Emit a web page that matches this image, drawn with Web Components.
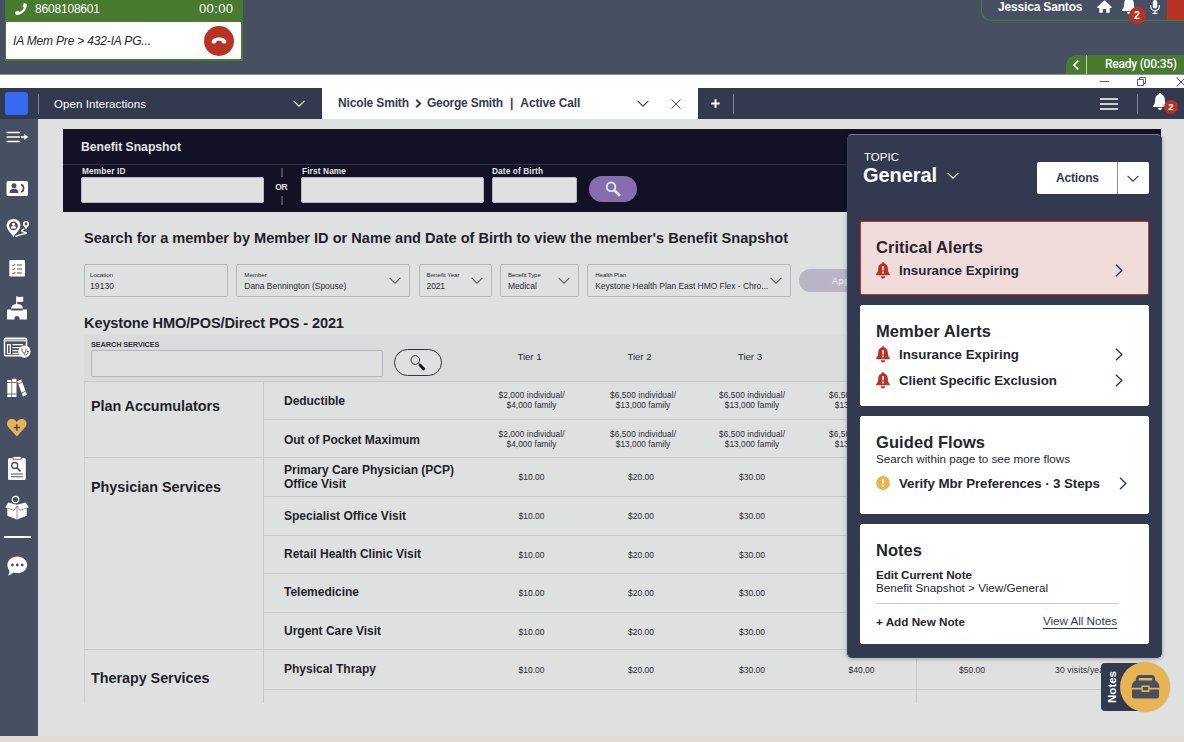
<!DOCTYPE html>
<html lang="en">
<head>
<meta charset="utf-8">
<title>Benefit Snapshot</title>
<style>
  body {
    margin: 0;
    width: 1184px;
    height: 742px;
    overflow: hidden;
    font-family: "Liberation Sans", Arial, sans-serif;
    color: #1f1f29;
    background: #e1dbd4;
  }
</style>
</head>
<body>
<agent-desktop></agent-desktop>

<script>
// icons, each drawn in a box of [width, height]
const icons = {
  phone: [12, 12, `<path fill="#fff" d="M9.4 .3l2.1 .5c.3 .1 .4 .3 .4 .6C11.600 7.400 7 11.900 1.200 11.900c-.3 0-.5-.1-.6-.4L.1 9.300c-.1-.3 .1-.5 .3-.6l2.500-1c.2-.1 .5 0 .6 .2l1 1.200C6.500 8.100 8 6.600 8.900 4.600L7.700 3.600c-.2-.2-.2-.4-.2-.6L8.700 .6c.1-.2 .4-.4 .7-.3z"/>`],
  hangup: [16, 8, `<path fill="#fff" d="M8 .6c3.500 0 7 1.300 7.200 3.900 .1 1.500-.4 2.200-1.400 2.100l-2.200-.4c-.7-.1-1-.6-1-1.200V4.200C9.200 3.600 6.800 3.600 5.400 4.200V5c0 .6-.3 1.100-1 1.200l-2.200 .4C1.200 6.700 .7 6 .8 4.500 1 1.900 4.500 .6 8 .6z"/>`],
  home: [15, 13, `<path fill="#fff" d="M7.500 .3L15 7.300l-.8 .7H12.700V12.800H9.200V9H5.800v3.800H2.300V8H.8L0 7.300z"/>`],
  bell: [14, 17, `<path fill="#fff" d="M7 0c.8 0 1.300 .5 1.300 1.200C10.700 1.900 11.700 3.900 11.800 6.400c.1 3.400 .6 5 2.100 6.400 .3 .7 0 1.200-.7 1.200H.8C.1 14-.2 13.500 .1 12.800c1.500-1.400 2-3 2.100-6.400 .1-2.500 1.100-4.500 3.500-5.200C5.700 .5 6.200 0 7 0zM4.900 14.800h4.200C9 16.200 8.200 17 7 17s-2-.8-2.100-2.200z"/>`],
  mic: [10, 14, `<rect x="2.800" y="0" width="4.400" height="8.500" rx="2.200" fill="#fff"/><path d="M.7 5v1.500a4.300 4.300 0 0 0 8.600 0V5M5 10.800V13M2.500 13.300h5" fill="none" stroke="#fff" stroke-width="1.200"/>`],
  down: [12, 7, `<path d="M.6 .8L6 6.200 11.400 .8" fill="none" stroke="currentColor" stroke-width="1.100"/>`],
  right: [8, 13, `<path d="M1 .8L6.800 6.500 1 12.200" fill="none" stroke="#2f3850" stroke-width="1.400"/>`],
  back: [6, 10, `<path d="M5.300 .7L1 5l4.300 4.300" fill="none" stroke="#fff" stroke-width="1.700"/>`],
  crumb: [7, 9, `<path d="M1.200 .8L5.200 4.500 1.200 8.200" fill="none" stroke="#333a4f" stroke-width="1.900"/>`],
  close: [10, 10, `<path d="M.6 .6l8.800 8.800M9.400 .6L.6 9.400" fill="none" stroke="#4c5366" stroke-width="1"/>`],
  plus: [9, 9, `<path d="M4.500 .3v8.400M.3 4.500h8.400" stroke="#fff" stroke-width="2"/>`],
  menu: [18, 12, `<path d="M0 1h18M0 6h18M0 11h18" stroke="#fff" stroke-width="1.600"/>`],
  minimize: [9, 9, `<path d="M0 4.500h9" stroke="#5a6172" stroke-width="1"/>`],
  restore: [9, 9, `<path d="M.5 2.500h6v6h-6zM2.500 2.500v-2h6v6h-2" fill="none" stroke="#5a6172" stroke-width="1"/>`],
  search: [16, 16, `<circle cx="6" cy="5.800" r="4.300" fill="none" stroke="#e3e3e6" stroke-width="1.900"/><path d="M9.300 9.200l5.600 5.600" stroke="#e3e3e6" stroke-width="2.800"/>`],
  lookup: [16, 16, `<circle cx="5.300" cy="5" r="4.300" fill="none" stroke="#333" stroke-width="1"/><path d="M8.500 8.400l1.700 1.700" stroke="#222" stroke-width="1.200"/><path d="M9.500 9.500l5 5.200" stroke="#11101f" stroke-width="2.800"/>`],
  alert: [14, 17, `<path fill="#b83225" d="M7 .3c.8 0 1.200 .5 1.300 1.200 2.400 .6 3.400 2.500 3.500 4.800 .1 3.200 .6 4.400 2 5.800 .3 .7 0 1.200-.7 1.200H.9c-.7 0-1-.5-.7-1.200 1.400-1.400 1.900-2.600 2-5.800 .1-2.300 1.100-4.200 3.500-4.800C5.800 .8 6.200 .3 7 .3zM4.900 14.300h4.200c-.1 1.400-.9 2.200-2.100 2.200s-2-.8-2.100-2.200z"/><path d="M6 4.300h2l-.4 4.200H6.400z" fill="#fff"/><circle cx="7" cy="10.500" r="1.050" fill="#fff"/>`],
  warn: [14, 14, `<circle cx="7" cy="7" r="6.900" fill="#e7b453"/><path d="M6 3h2l-.4 4.700H6.400z" fill="#fff"/><circle cx="7" cy="10" r="1.100" fill="#fff"/>`],
  toolbox: [29, 24, `<path d="M6.300 6.500V4c0-1.600 .9-2.500 2.400-2.500h11.600c1.500 0 2.400 .9 2.400 2.500v2.500" fill="none" stroke="#474f62" stroke-width="2.800"/><path d="M4.500 5.500h20c2.700 1.500 3.800 4 4 7.300H18.700v-2.300h-8.400v2.300H.5c.2-3.300 1.300-5.800 4-7.300z" fill="#474f62"/><path d="M1 14.500h9.500V17h8v-2.500H28V21c0 1.700-.8 2.500-2.300 2.500H3.300C1.800 23.500 1 22.700 1 21z" fill="#474f62"/><path d="M11.800 12h5.400v3.300h-5.400z" fill="#474f62"/>`],

  // side rail, all in the same 38x40 cell
  expand: [38, 36, `<path d="M6.500 13.500h13.500M6.500 18h13.500M6.500 22.500h13.500" stroke="#fff" stroke-width="1.600"/><path d="M21 18h4" stroke="#fff" stroke-width="1.600"/><path d="M24.300 15l4 3-4 3z" fill="#fff"/>`],
  contact: [38, 40, `<rect x="6.500" y="13" width="21.500" height="15" rx="1.500" fill="#fff"/><circle cx="14" cy="17.800" r="2.500" fill="#474f62"/><path d="M9.500 25c0-2.800 1.500-4.300 4.500-4.300s4.500 1.500 4.500 4.300z" fill="#474f62"/><path d="M21 16.600c3.400 .4 3.400 7 0 7.400" fill="none" stroke="#474f62" stroke-width="1.700"/>`],
  journey: [38, 40, `<path d="M13.500 11c4 0 6.900 2.800 6.900 6.500 0 4-4.400 7.600-6.900 11.500-2.500-3.900-6.900-7.500-6.900-11.500 0-3.700 2.900-6.500 6.900-6.500z" fill="#fff"/><circle cx="13.500" cy="17.800" r="4.400" fill="#474f62"/><circle cx="13.500" cy="16.300" r="1.500" fill="#fff"/><path d="M10.700 20.600c0-1.800 1-2.800 2.800-2.800s2.800 1 2.800 2.800z" fill="#fff"/><circle cx="26" cy="16" r="2.200" fill="none" stroke="#fff" stroke-width="1.600"/><path d="M24 18l2 3.600 2-3.600z" fill="#fff"/><path d="M15.500 28.500c3.500-2 7-2.300 10.300-3 1.500-.5-.3-1.200-2.300-1.500-2.300-.5-2.500-2 .8-3.100" fill="none" stroke="#fff" stroke-width="1.400"/>`],
  checklist: [38, 40, `<rect x="9.300" y="12" width="15.700" height="16.600" rx=".8" fill="#fff"/><path d="M12.500 17l1 1 1.700-2M12.500 21l1 1 1.700-2M12.500 25l1 1 1.700-2M17 17h5M17 21h5M17 25h5" fill="none" stroke="#474f62" stroke-width="1"/>`],
  capitol: [38, 40, `<path d="M16.700 8.300v9" stroke="#fff" stroke-width="1.100"/><path d="M17 8.500c2 1 4-.3 6.200 .3v5c-2.200-.6-4.200 .7-6.200-.2z" fill="#fff"/><path d="M11 20.500c.5-3.200 2.500-4.600 6-4.600s5.500 1.400 6 4.600z" fill="#fff"/><path d="M7 21.500h4.500v1h11v-1H27v10h-7.500v-1.500c0-2.700-5-2.700-5 0v1.500H7z" fill="#fff"/>`],
  coverage: [38, 40, `<rect x="4.500" y="10.300" width="22" height="17.500" rx="1.200" fill="#474f62" stroke="#fff" stroke-width="1.500"/><path d="M4.500 11.200h22v2.300h-22z" fill="#c9ccd1"/><path d="M7.500 16.700h2.800v9H7.500z" fill="none" stroke="#fff" stroke-width="1.200"/><path d="M12.500 16.700h10.500M12.500 19.700h8M12.500 22.700h6M12.500 25.500h6" stroke="#fff" stroke-width="1.300"/><circle cx="24.400" cy="23.600" r="6.200" fill="#fff"/><path d="M22 20.500v2c0 3 4 3 4 0v-2M24 24.800c0 3.200 3.800 2.800 3.800-.3" fill="none" stroke="#474f62" stroke-width=".9"/><circle cx="27.800" cy="23.500" r=".9" fill="#474f62"/>`],
  library: [38, 40, `<path d="M7.300 12h4.200v17H7.300zM12.200 10.800h4.300V29h-4.300z" fill="#fff"/><path d="M17.200 13.200l4-1.600 5.800 15.200-4 1.600z" fill="#fff"/><path d="M7 14.500h9.500M7 26h9.500M17.800 16l4.400-1.700M21.400 25l4.300-1.700" stroke="#474f62" stroke-width=".8"/>`],
  heart: [38, 40, `<path d="M16.800 14.300c1.500-3.500 4.500-3.900 6.700-3 3.600 1.500 4 5.600 1.500 8.300L16.800 28.500 8.600 19.600c-2.500-2.700-2.100-6.800 1.500-8.300 2.200-.9 5.200-.5 6.700 3z" fill="#e7b453"/><path d="M16.800 16.300v6.400M13.600 19.500H20" stroke="#474f62" stroke-width="1.700"/>`],
  audit: [38, 40, `<rect x="8" y="10" width="17.800" height="22" rx="1.500" fill="#fff"/><path d="M13 8.500h8.300v2.800H13z" fill="#fff" stroke="#474f62" stroke-width=".8"/><circle cx="14.700" cy="17.500" r="3" fill="none" stroke="#474f62" stroke-width="1.300"/><path d="M16.900 19.700l3.600 3.600" stroke="#474f62" stroke-width="1.700"/><path d="M11 26h11.800M11 28.800h11.800" stroke="#474f62" stroke-width="1.100"/>`],
  parcel: [38, 40, `<circle cx="15.500" cy="11.500" r="3.200" fill="#474f62" stroke="#fff" stroke-width="1.200"/><path d="M8.300 14.500l8.700 2.300 8.700-2.300 3 4.700-2 1.100v7.400L17 31.500 7.300 27.700v-7.400l-2-1.100z" fill="#fff"/><path d="M17 18v13M17 18l-3 4.300-6.700-2.300M17 18l3 4.300 6.700-2.300" fill="none" stroke="#474f62" stroke-width=".6"/>`],
  chat: [38, 40, `<path d="M17.300 10.500c5.700 0 9.900 3.700 9.900 8.300s-4.200 8.300-9.900 8.300c-1.500 0-2.800-.2-4-.7-1.500 1.600-3.200 2.500-5.400 3 1-1.400 1.500-2.700 1.600-4.500-1.300-1.600-2.100-3.700-2.100-6.100 0-4.600 4.200-8.300 9.900-8.300z" fill="#fff"/><circle cx="12.400" cy="19" r="1.400" fill="#474f62"/><circle cx="17.300" cy="19" r="1.400" fill="#474f62"/><circle cx="22.200" cy="19" r="1.400" fill="#474f62"/>`]
};

class UiIcon extends HTMLElement {
  constructor() {
    super();
    this.attachShadow({ mode: 'open' });
  }

  connectedCallback() {
    const [w, h, body] = icons[this.getAttribute('name')];
    this.shadowRoot.innerHTML = `
      <style>
        :host { display: block; flex: none; width: ${w}px; height: ${h}px; }
        svg { display: block; }
      </style>
      <svg width="${w}" height="${h}" viewBox="0 0 ${w} ${h}">${body}</svg>`;
  }
}

// one line of text, tracked so that it takes exactly `w` pixels
class FitText extends HTMLElement {
  constructor() {
    super();
    this.attachShadow({ mode: 'open' });
    this.shadowRoot.innerHTML = `
      <style>
        :host { display: block; flex: none; white-space: nowrap; }
        span { display: inline-block; }
      </style>
      <span><slot></slot></span>`;
  }

  connectedCallback() {
    const w = Number(this.getAttribute('w'));
    const gaps = this.textContent.length - 1;
    if (!w || gaps < 1) { return; }
    const natural = this.shadowRoot.querySelector('span').getBoundingClientRect().width;
    this.style.width = w + 'px';
    this.style.letterSpacing = ((w - natural) / gaps).toFixed(3) + 'px';
  }
}

class CountBadge extends HTMLElement {
  constructor() {
    super();
    this.attachShadow({ mode: 'open' });
    this.shadowRoot.innerHTML = `
      <style>
        :host {
          display: block;
          width: var(--size, 16px);
          height: var(--size, 16px);
          line-height: var(--size, 16px);
          border-radius: 50%;
          background: #b83225;
          color: #fff;
          font-size: 10.500px;
          font-weight: bold;
          text-align: center;
        }
      </style>
      <slot></slot>`;
  }
}

class CallBar extends HTMLElement {
  constructor() {
    super();
    this.attachShadow({ mode: 'open' });
    this.shadowRoot.innerHTML = `
      <style>
        :host {
          display: flex;
          justify-content: space-between;
          height: 74px;
          background: #474f62;
          border-bottom: 1px solid #8b8f9a;
          color: #fff;
        }
        .call { width: 238px; height: 61px; margin-left: 5px; background: #487a30; }
        .number { display: flex; align-items: center; height: 22px; box-sizing: border-box; padding: 0 10px 5px; font-size: 12px; line-height: 14px; }
        .number fit-text { margin-left: 8px; }
        .number fit-text:last-child { margin-left: auto; font-size: 13px; }
        .queue { display: flex; align-items: center; justify-content: space-between; height: 37px; margin: 0 2px 0 1px; padding: 0 7px; background: #fff; color: #25262e; font-size: 12px; font-style: italic; }
        .end { display: flex; align-items: center; justify-content: center; width: 30px; height: 30px; border-radius: 50%; background: #b83225; }
        .right { display: flex; flex-direction: column; align-items: flex-end; justify-content: space-between; }
        .user { display: flex; width: 203px; height: 21px; box-sizing: border-box; border: 1px solid #487a30; border-width: 0 0 1px 1px; border-radius: 0 0 0 10px; font-size: 12px; font-weight: bold; }
        .user > fit-text { margin-left: 16px; line-height: 15px; }
        .user ui-icon[name=home] { margin-left: 14px; }
        .alerts { position: relative; margin: -3px 0 0 10px; }
        .alerts count-badge { --size: 17px; position: absolute; left: 7px; top: 10px; }
        .user ui-icon[name=mic] { margin: 0 7px 0 14px; }
        .stop { flex: 1; height: 20px; background: #b83225; }
        .ready { display: flex; align-items: center; width: 118px; height: 19px; border-radius: 10px 0 0 0; background: #487a30; font: 500 12px Roboto, sans-serif; }
        .ready ui-icon { margin: 0 7px; }
        .ready i { width: 1px; height: 19px; background: #c3d3bb; }
        .ready fit-text { margin-left: 18px; line-height: 15px; padding-bottom: 1px; }
      </style>
      <div class="call">
        <div class="number">
          <ui-icon name="phone"></ui-icon>
          <fit-text w="65">8608108601</fit-text>
          <fit-text w="34">00:00</fit-text>
        </div>
        <div class="queue">
          <fit-text w="138">IA Mem Pre &gt; 432-IA PG...</fit-text>
          <div class="end"><ui-icon name="hangup"></ui-icon></div>
        </div>
      </div>
      <div class="right">
        <div class="user">
          <fit-text w="84.500">Jessica Santos</fit-text>
          <ui-icon name="home"></ui-icon>
          <div class="alerts"><ui-icon name="bell"></ui-icon><count-badge>2</count-badge></div>
          <ui-icon name="mic"></ui-icon>
          <div class="stop"></div>
        </div>
        <div class="ready">
          <ui-icon name="back"></ui-icon><i></i>
          <fit-text w="72">Ready (00:35)</fit-text>
        </div>
      </div>`;
  }
}

class WindowBar extends HTMLElement {
  constructor() {
    super();
    this.attachShadow({ mode: 'open' });
    this.shadowRoot.innerHTML = `
      <style>
        :host { display: flex; align-items: center; justify-content: flex-end; gap: 28px; height: 13px; background: #fff; overflow: hidden; }
        ui-icon:last-child { margin: 0 -2px 0 2px; }
      </style>
      <ui-icon name="minimize"></ui-icon><ui-icon name="restore"></ui-icon><ui-icon name="close"></ui-icon>`;
  }
}

class NavBar extends HTMLElement {
  constructor() {
    super();
    this.attachShadow({ mode: 'open' });
    this.shadowRoot.innerHTML = `
      <style>
        :host { display: flex; align-items: center; height: 31px; background: #333a4f; color: #fff; font-size: 11.500px; }
        .logo { width: 23px; height: 23px; margin: 0 10px 0 5px; border-radius: 3px; background: #346bf0; }
        i { width: 1px; height: 20px; background: #7f8492; }
        .open { display: flex; align-items: center; justify-content: space-between; width: 251px; padding: 0 17px 0 15px; }
        .tab { display: flex; align-items: center; box-sizing: border-box; width: 376px; height: 31px; padding-left: 16px; background: #fff; color: #333a4f; font-size: 12px; font-weight: bold; }
        .tab fit-text { padding-bottom: 1px; }
        .tab ui-icon[name=crumb] { margin: 0 5px 0 6px; }
        .tab fit-text + fit-text { margin-left: 7px; }
        .tab ui-icon[name=down] { margin: 0 22px 0 auto; }
        .tab ui-icon[name=close] { margin-right: 17px; }
        .tools { display: flex; align-items: center; flex: 1; }
        .tools ui-icon[name=plus] { margin: 0 13px; }
        .tools ui-icon[name=menu] { margin: 0 19px 0 auto; }
        .alerts { position: relative; margin: -4px 17px 0 15px; }
        .alerts count-badge { --size: 14px; position: absolute; left: 11px; top: 7px; font-size: 9.500px; }
      </style>
      <div class="logo"></div><i></i>
      <div class="open"><fit-text w="92">Open Interactions</fit-text><ui-icon name="down"></ui-icon></div>
      <div class="tab">
        <fit-text w="71">Nicole Smith</fit-text>
        <ui-icon name="crumb"></ui-icon>
        <fit-text w="76">George Smith</fit-text>
        <fit-text>|</fit-text>
        <fit-text w="60">Active Call</fit-text>
        <ui-icon name="down"></ui-icon>
        <ui-icon name="close"></ui-icon>
      </div>
      <div class="tools">
        <ui-icon name="plus"></ui-icon><i></i>
        <ui-icon name="menu"></ui-icon><i></i>
        <div class="alerts"><ui-icon name="bell"></ui-icon><count-badge>2</count-badge></div>
      </div>`;
  }
}

class SideRail extends HTMLElement {
  constructor() {
    super();
    this.attachShadow({ mode: 'open' });
    this.shadowRoot.innerHTML = `
      <style>
        :host { display: flex; flex-direction: column; width: 38px; background: #474f62; }
        ui-icon[name=expand] { margin-bottom: 13px; }
        hr { width: 27px; height: 2px; margin: 8px 0 8px 4px; border: 0; background: #fff; }
      </style>
      <ui-icon name="expand"></ui-icon>
      <ui-icon name="contact"></ui-icon>
      <ui-icon name="journey"></ui-icon>
      <ui-icon name="checklist"></ui-icon>
      <ui-icon name="capitol"></ui-icon>
      <ui-icon name="coverage"></ui-icon>
      <ui-icon name="library"></ui-icon>
      <ui-icon name="heart"></ui-icon>
      <ui-icon name="audit"></ui-icon>
      <ui-icon name="parcel"></ui-icon>
      <hr>
      <ui-icon name="chat"></ui-icon>`;
  }
}

class MemberSearch extends HTMLElement {
  constructor() {
    super();
    this.attachShadow({ mode: 'open' });
    this.shadowRoot.innerHTML = `
      <style>
        :host { display: block; height: 83px; background: #131126; color: #e3e4e6; font-weight: bold; }
        .title { display: flex; align-items: center; height: 36px; padding-left: 18px; border-bottom: 1px solid #2e3440; box-sizing: border-box; font-size: 12.200px; }
        .fields { display: flex; padding-left: 18px; }
        .field { font-size: 8.300px; line-height: 12px; }
        .field div { height: 26px; border-radius: 2px; background: #dfe1e0; border: 1px solid #b9b9c4; box-sizing: border-box; }
        .field fit-text { padding-left: 1px; }
        .or { display: flex; flex-direction: column; align-items: center; width: 37px; padding: 3px 2px 0 0; box-sizing: border-box; font-size: 8.500px; line-height: 10px; }
        .or i { width: 2px; height: 9px; margin-bottom: 5px; background: #4c4c55; }
        .or i:last-child { margin: 4px 0 0; }
        .go { display: flex; align-items: center; justify-content: center; width: 48px; height: 26px; margin: 11px 0 0 12px; border-radius: 13px; background: #866db0; }
      </style>
      <div class="title"><fit-text w="100">Benefit Snapshot</fit-text></div>
      <div class="fields">
        <div class="field" style="width: 183px"><fit-text w="43.500">Member ID</fit-text><div></div></div>
        <div class="or"><i></i><fit-text w="12.500">OR</fit-text><i></i></div>
        <div class="field" style="width: 183px; margin-right: 8px"><fit-text w="44">First Name</fit-text><div></div></div>
        <div class="field" style="width: 85px"><fit-text w="51" style="padding: 0">Date of Birth</fit-text><div></div></div>
        <div class="go"><ui-icon name="search"></ui-icon></div>
      </div>`;
  }
}

class FilterBox extends HTMLElement {
  constructor() {
    super();
    this.attachShadow({ mode: 'open' });
  }

  connectedCallback() {
    const { label, labelWidth, width, open } = this.dataset;
    this.shadowRoot.innerHTML = `
      <style>
        :host { display: flex; align-items: center; justify-content: space-between; box-sizing: border-box; width: ${width}px; height: 33px; padding: 0 8px 0 ${open === 'no' ? 5 : 7}px; border: 1px solid #b4b7b8; border-radius: 2px; color: #2a2b33; font-size: 8.500px; line-height: 11px; }
        .label { font-size: 6.200px; line-height: 12px; }
        ui-icon { color: #555a64; margin-left: -4px; }
      </style>
      <div>
        <fit-text class="label" w="${labelWidth}">${label}</fit-text>
        <slot></slot>
      </div>
      ${open === 'no' ? '' : '<ui-icon name="down"></ui-icon>'}`;
  }
}

class PlanFilters extends HTMLElement {
  constructor() {
    super();
    this.attachShadow({ mode: 'open' });
    this.shadowRoot.innerHTML = `
      <style>
        :host { display: flex; align-items: center; }
        filter-box { margin-right: 8.300px; }
        .apply { box-sizing: border-box; width: 80px; height: 23px; padding-left: 32px; border-radius: 12px; background: #b9b5c6; color: #e1e1e6; font-size: 9.500px; font-weight: bold; line-height: 23px; }
      </style>
      <filter-box data-label="Location" data-label-width="23" data-width="144" data-open="no"><fit-text w="24">19130</fit-text></filter-box>
      <filter-box data-label="Member" data-label-width="22.500" data-width="174"><fit-text w="102">Dana Bennington (Spouse)</fit-text></filter-box>
      <filter-box data-label="Benefit Year" data-label-width="33" data-width="73"><fit-text w="18.500">2021</fit-text></filter-box>
      <filter-box data-label="Benefit Type" data-label-width="33" data-width="79"><fit-text w="29">Medical</fit-text></filter-box>
      <filter-box data-label="Health Plan" data-label-width="31" data-width="204"><fit-text w="173">Keystone Health Plan East HMO Flex - Chro...</fit-text></filter-box>
      <div class="apply">Apply</div>`;
  }
}

const services = [
  { name: 'Plan Accumulators', w: 129, pad: 15, rows: [
    { name: 'Deductible', w: 61, h: 38, limits: true, shift: 1 },
    { name: 'Out of Pocket Maximum', w: 136, h: 39, limits: true, shift: 1 }
  ] },
  { name: 'Physician Services', w: 130, pad: 20, rows: [
    { name: 'Primary Care Physician (PCP)', w: 170, more: 'Office Visit', moreWidth: 62, h: 38, costs: [10, 20, 30] },
    { name: 'Specialist Office Visit', w: 122, h: 39, costs: [10, 20, 30] },
    { name: 'Retail Health Clinic Visit', w: 137, h: 38, costs: [10, 20, 30], shift: -1 },
    { name: 'Telemedicine', w: 75, h: 39, costs: [10, 20, 30], shift: -1 },
    { name: 'Urgent Care Visit', w: 97, h: 38, costs: [10, 20, 30], shift: -1 }
  ] },
  { name: 'Therapy Services', w: 118.500, pad: 19, rows: [
    { name: 'Physical Thrapy', w: 92, h: 39, costs: [10, 20, 30, 40, 50], note: '30 visits/year', shift: -1 },
    { name: '', h: 14 }
  ] }
];

class BenefitTable extends HTMLElement {
  constructor() {
    super();
    this.attachShadow({ mode: 'open' });
    this.shadowRoot.innerHTML = `
      <style>
        :host { display: block; width: 1051px; }
        .head { display: grid; grid-template-columns: 391px 109px 111px 110px 330px; height: 47px; background: #dadcdb; color: #2a2b33; font-size: 9.600px; }
        .head > fit-text { justify-self: center; line-height: 46px; }
        .find { display: flex; gap: 11px; padding: 5px 0 0 7px; }
        .find b { display: block; font-size: 7.400px; line-height: 11px; color: #33343f; }
        .box { width: 292px; height: 27px; box-sizing: border-box; border: 1px solid #b4b5bf; border-radius: 2px; background: #dfe1e0; }
        .pill { display: flex; align-items: center; justify-content: center; box-sizing: border-box; width: 48px; height: 27px; margin-top: 10px; border: 1px solid #33343f; border-radius: 14px; background: #dfe1e0; }
        .group { display: grid; grid-template-columns: 178px 1fr; border-top: 1px solid #c6c8c9; margin-top: -1px; border-left: 1px solid #cfd1d2; }
        .head + .group { margin-top: 0; }
        .head + .group .row:first-child { margin-top: -1px; }
        .group > fit-text { padding-left: 6px; font-size: 14.400px; font-weight: bold; line-height: 18px; }
        .rows { border-left: 1px solid #c6c8c9; }
        .row { display: grid; grid-template-columns: 212px 111px 110px 110px 110px 110px 1fr; align-items: center; box-sizing: border-box; border-top: 1px solid #c6c8c9; font-size: 8.500px; line-height: 10px; color: #2a2b33; }
        .row:first-child { border-top: 0; }
        .label { padding-left: 20px; color: #1f1f29; font-size: 12px; font-weight: bold; line-height: 14px; }
        .up { padding-bottom: 2px; }
        .low { padding-top: 2px; }
        .cell { display: flex; flex-direction: column; align-items: center; }
        .cell:nth-child(3) { padding-right: 2px; }
        .limits .cell { font-size: 8.300px; }
        .limits .cell:nth-child(3) { padding: 0 0 0 2px; }
        .group:last-child .cell:nth-child(5) { border-right: 1px solid #c6c8c9; align-self: stretch; justify-content: center; }
      </style>
      <div class="head">
        <div class="find">
          <div><b><fit-text w="68.500">SEARCH SERVICES</fit-text></b><div class="box"></div></div>
          <div class="pill"><ui-icon name="lookup"></ui-icon></div>
        </div>
        <fit-text w="24">Tier 1</fit-text><fit-text w="24">Tier 2</fit-text><fit-text w="24">Tier 3</fit-text>
      </div>
      ${services.map(s => this.group(s)).join('')}`;
  }

  group(s) {
    return `
      <div class="group">
        <fit-text style="padding-top: ${s.pad}px" w="${s.w}">${s.name}</fit-text>
        <div class="rows">${s.rows.map(r => this.row(r)).join('')}</div>
      </div>`;
  }

  row(r) {
    let cells = [];
    if (r.limits) {
      cells = [['$2,000', '$4,000', 50], ['$6,500', '$13,000', 54.500], ['$6,500', '$13,000', 54.500], ['$6,500', '$13,000', 54.500]]
        .map(([one, all, w]) => `<fit-text w="66">${one} individual/</fit-text><fit-text w="${w}">${all} family</fit-text>`);
    } else if (r.costs) {
      cells = r.costs.map(v => `<fit-text w="26">$${v}.00</fit-text>`);
    }
    if (r.note) { cells.push(`<fit-text w="52">${r.note}</fit-text>`); }
    while (cells.length < 6) { cells.push(''); }
    const nudge = r.shift > 0 ? 'low' : r.shift < 0 ? 'up' : '';
    return `
      <div class="row ${r.limits ? 'limits' : ''}" style="height: ${r.h}px">
        <div class="label ${nudge}">
          ${r.name ? `<fit-text w="${r.w}">${r.name}</fit-text>` : ''}
          ${r.more ? `<fit-text w="${r.moreWidth}">${r.more}</fit-text>` : ''}
        </div>
        ${cells.map(c => `<div class="cell">${c}</div>`).join('')}
      </div>`;
  }
}

class TopicCard extends HTMLElement {
  constructor() {
    super();
    this.attachShadow({ mode: 'open' });
    this.shadowRoot.innerHTML = `
      <style>
        :host { display: block; box-sizing: border-box; padding: 15px 25px 0 15px; border: 1px solid #fff; border-radius: 2px; background: #fff; color: #25262e; }
        :host([critical]) { background: #f0dcdb; border-color: #c0392b; }
        .title { font-size: 16.500px; font-weight: bold; line-height: 20px; }
      </style>
      <div class="title"><slot name="title"></slot></div>
      <slot></slot>`;
  }
}

class TopicLink extends HTMLElement {
  constructor() {
    super();
    this.attachShadow({ mode: 'open' });
    this.shadowRoot.innerHTML = `
      <style>
        :host { display: flex; align-items: center; height: 26px; font-size: 13.300px; font-weight: bold; }
        .mark { margin-right: 9px; }
        .go { margin-left: auto; }
      </style>
      <ui-icon class="mark" name="${this.getAttribute('icon') || 'alert'}"></ui-icon>
      <slot></slot>
      <ui-icon class="go" name="right"></ui-icon>`;
  }
}

class TopicPanel extends HTMLElement {
  constructor() {
    super();
    this.attachShadow({ mode: 'open' });
    this.shadowRoot.innerHTML = `
      <style>
        :host { display: block; box-sizing: border-box; width: 315px; height: 524px; padding: 0 12px; border: 1px solid #3c4357; border-top-color: #777c88; border-radius: 5px; background: #333a4f; color: #fff; box-shadow: 0 1px 4px rgba(0, 0, 0, 0.3); }
        header { display: flex; justify-content: space-between; padding: 15px 0 0 4px; height: 71px; }
        .over { font-size: 11.500px; line-height: 14px; }
        .topic { display: flex; align-items: center; gap: 10px; margin-left: -1px; font-size: 20px; font-weight: bold; line-height: 23px; }
        .actions { display: flex; align-items: center; width: 112px; height: 32px; margin-top: 12px; border-radius: 2px; background: #fff; color: #333a4f; font-size: 12px; font-weight: bold; }
        .actions fit-text { margin-left: 19px; }
        .actions i { width: 1px; height: 32px; margin: 0 9px 0 18px; background: #8c909b; }
        topic-card { margin-bottom: 10px; }
        .sub { font-size: 11.700px; font-weight: normal; line-height: 13px; }
        .edit { margin-top: 8px; font-size: 11.700px; font-weight: bold; line-height: 13px; }
        .foot { display: flex; justify-content: space-between; width: 243px; margin-top: 9px; border-top: 1px solid #ccc; box-sizing: border-box; padding: 11px 2px 0 0; font-size: 11.700px; line-height: 14px; }
        .foot b { display: block; }
        .foot fit-text { color: #333a4f; }
        .foot b fit-text { color: #25262e; }
        .all { height: 13px; line-height: 12px; border-bottom: 1px solid #333a4f; }
      </style>
      <header>
        <div>
          <fit-text class="over" w="35">TOPIC</fit-text>
          <div class="topic"><fit-text w="74">General</fit-text><ui-icon name="down"></ui-icon></div>
        </div>
        <div class="actions"><fit-text w="43">Actions</fit-text><i></i><ui-icon name="down"></ui-icon></div>
      </header>
      <topic-card critical style="height: 74px">
        <fit-text slot="title" w="107">Critical Alerts</fit-text>
        <topic-link><fit-text w="120">Insurance Expiring</fit-text></topic-link>
      </topic-card>
      <topic-card style="height: 101px">
        <fit-text slot="title" w="115">Member Alerts</fit-text>
        <topic-link><fit-text w="120">Insurance Expiring</fit-text></topic-link>
        <topic-link><fit-text w="158">Client Specific Exclusion</fit-text></topic-link>
      </topic-card>
      <topic-card style="height: 98px">
        <fit-text slot="title" w="109">Guided Flows</fit-text>
        <fit-text class="sub" w="194">Search within page to see more flows</fit-text>
        <topic-link icon="warn" style="margin: 5px -4px 0 0"><fit-text w="201">Verify Mbr Preferences · 3 Steps</fit-text></topic-link>
      </topic-card>
      <topic-card style="height: 120px">
        <fit-text slot="title" w="46">Notes</fit-text>
        <fit-text class="edit" w="96">Edit Current Note</fit-text>
        <fit-text class="sub" w="172">Benefit Snapshot &gt; View/General</fit-text>
        <div class="foot"><b><fit-text w="89">+ Add New Note</fit-text></b><fit-text class="all" w="74">View All Notes</fit-text></div>
      </topic-card>`;
  }
}

class NotesButton extends HTMLElement {
  constructor() {
    super();
    this.attachShadow({ mode: 'open' });
    this.shadowRoot.innerHTML = `
      <style>
        :host { display: flex; align-items: center; width: 69px; height: 50px; }
        .tab { display: flex; align-items: center; width: 40px; height: 48px; box-sizing: border-box; padding-left: 4px; border-radius: 4px 0 0 4px; background: #333a4f; color: #fff; }
        .tab span { writing-mode: vertical-rl; transform: rotate(180deg); font-size: 11.500px; font-weight: bold; line-height: 14px; }
        .tool { display: flex; flex: none; align-items: center; justify-content: center; width: 50px; height: 50px; margin-left: -21px; border-radius: 50%; background: #e7b453; box-shadow: 0 0 2px rgba(0, 0, 0, 0.2); z-index: 1; }
      </style>
      <div class="tab"><span>Notes</span></div>
      <div class="tool"><ui-icon name="toolbox"></ui-icon></div>`;
  }
}

class AgentDesktop extends HTMLElement {
  constructor() {
    super();
    this.attachShadow({ mode: 'open' });
    this.shadowRoot.innerHTML = `
      <style>
        :host { display: block; position: relative; height: 736px; }
        .work { display: flex; height: 617px; background: #dfe1e0; }
        main { flex: 1; padding: 10px 23px 0 25px; }
        h1, h2 { margin: 0 0 0 21px; font-size: 14.600px; line-height: 18px; }
        h1 { padding-top: 17px; }
        h2 { padding: 17px 0 2px; }
        plan-filters { margin: 16px 0 0 21px; height: 34px; overflow: hidden; }
        benefit-table { margin-left: 21px; }
        topic-panel { position: absolute; left: 847px; top: 134px; }
        notes-button { position: absolute; left: 1101px; top: 662px; }
      </style>
      <call-bar></call-bar>
      <window-bar></window-bar>
      <nav-bar></nav-bar>
      <div class="work">
        <side-rail></side-rail>
        <main>
          <member-search></member-search>
          <h1><fit-text w="704">Search for a member by Member ID or Name and Date of Birth to view the member's Benefit Snapshot</fit-text></h1>
          <plan-filters></plan-filters>
          <h2><fit-text w="260">Keystone HMO/POS/Direct POS - 2021</fit-text></h2>
          <benefit-table></benefit-table>
        </main>
      </div>
      <topic-panel></topic-panel>
      <notes-button></notes-button>`;
  }
}

customElements.define('ui-icon', UiIcon);
customElements.define('count-badge', CountBadge);
customElements.define('call-bar', CallBar);
customElements.define('window-bar', WindowBar);
customElements.define('nav-bar', NavBar);
customElements.define('side-rail', SideRail);
customElements.define('member-search', MemberSearch);
customElements.define('filter-box', FilterBox);
customElements.define('plan-filters', PlanFilters);
customElements.define('benefit-table', BenefitTable);
customElements.define('topic-card', TopicCard);
customElements.define('topic-link', TopicLink);
customElements.define('topic-panel', TopicPanel);
customElements.define('notes-button', NotesButton);
customElements.define('agent-desktop', AgentDesktop);
// last, so that every label is laid out when it measures itself
customElements.define('fit-text', FitText);
</script>
</body>
</html>
